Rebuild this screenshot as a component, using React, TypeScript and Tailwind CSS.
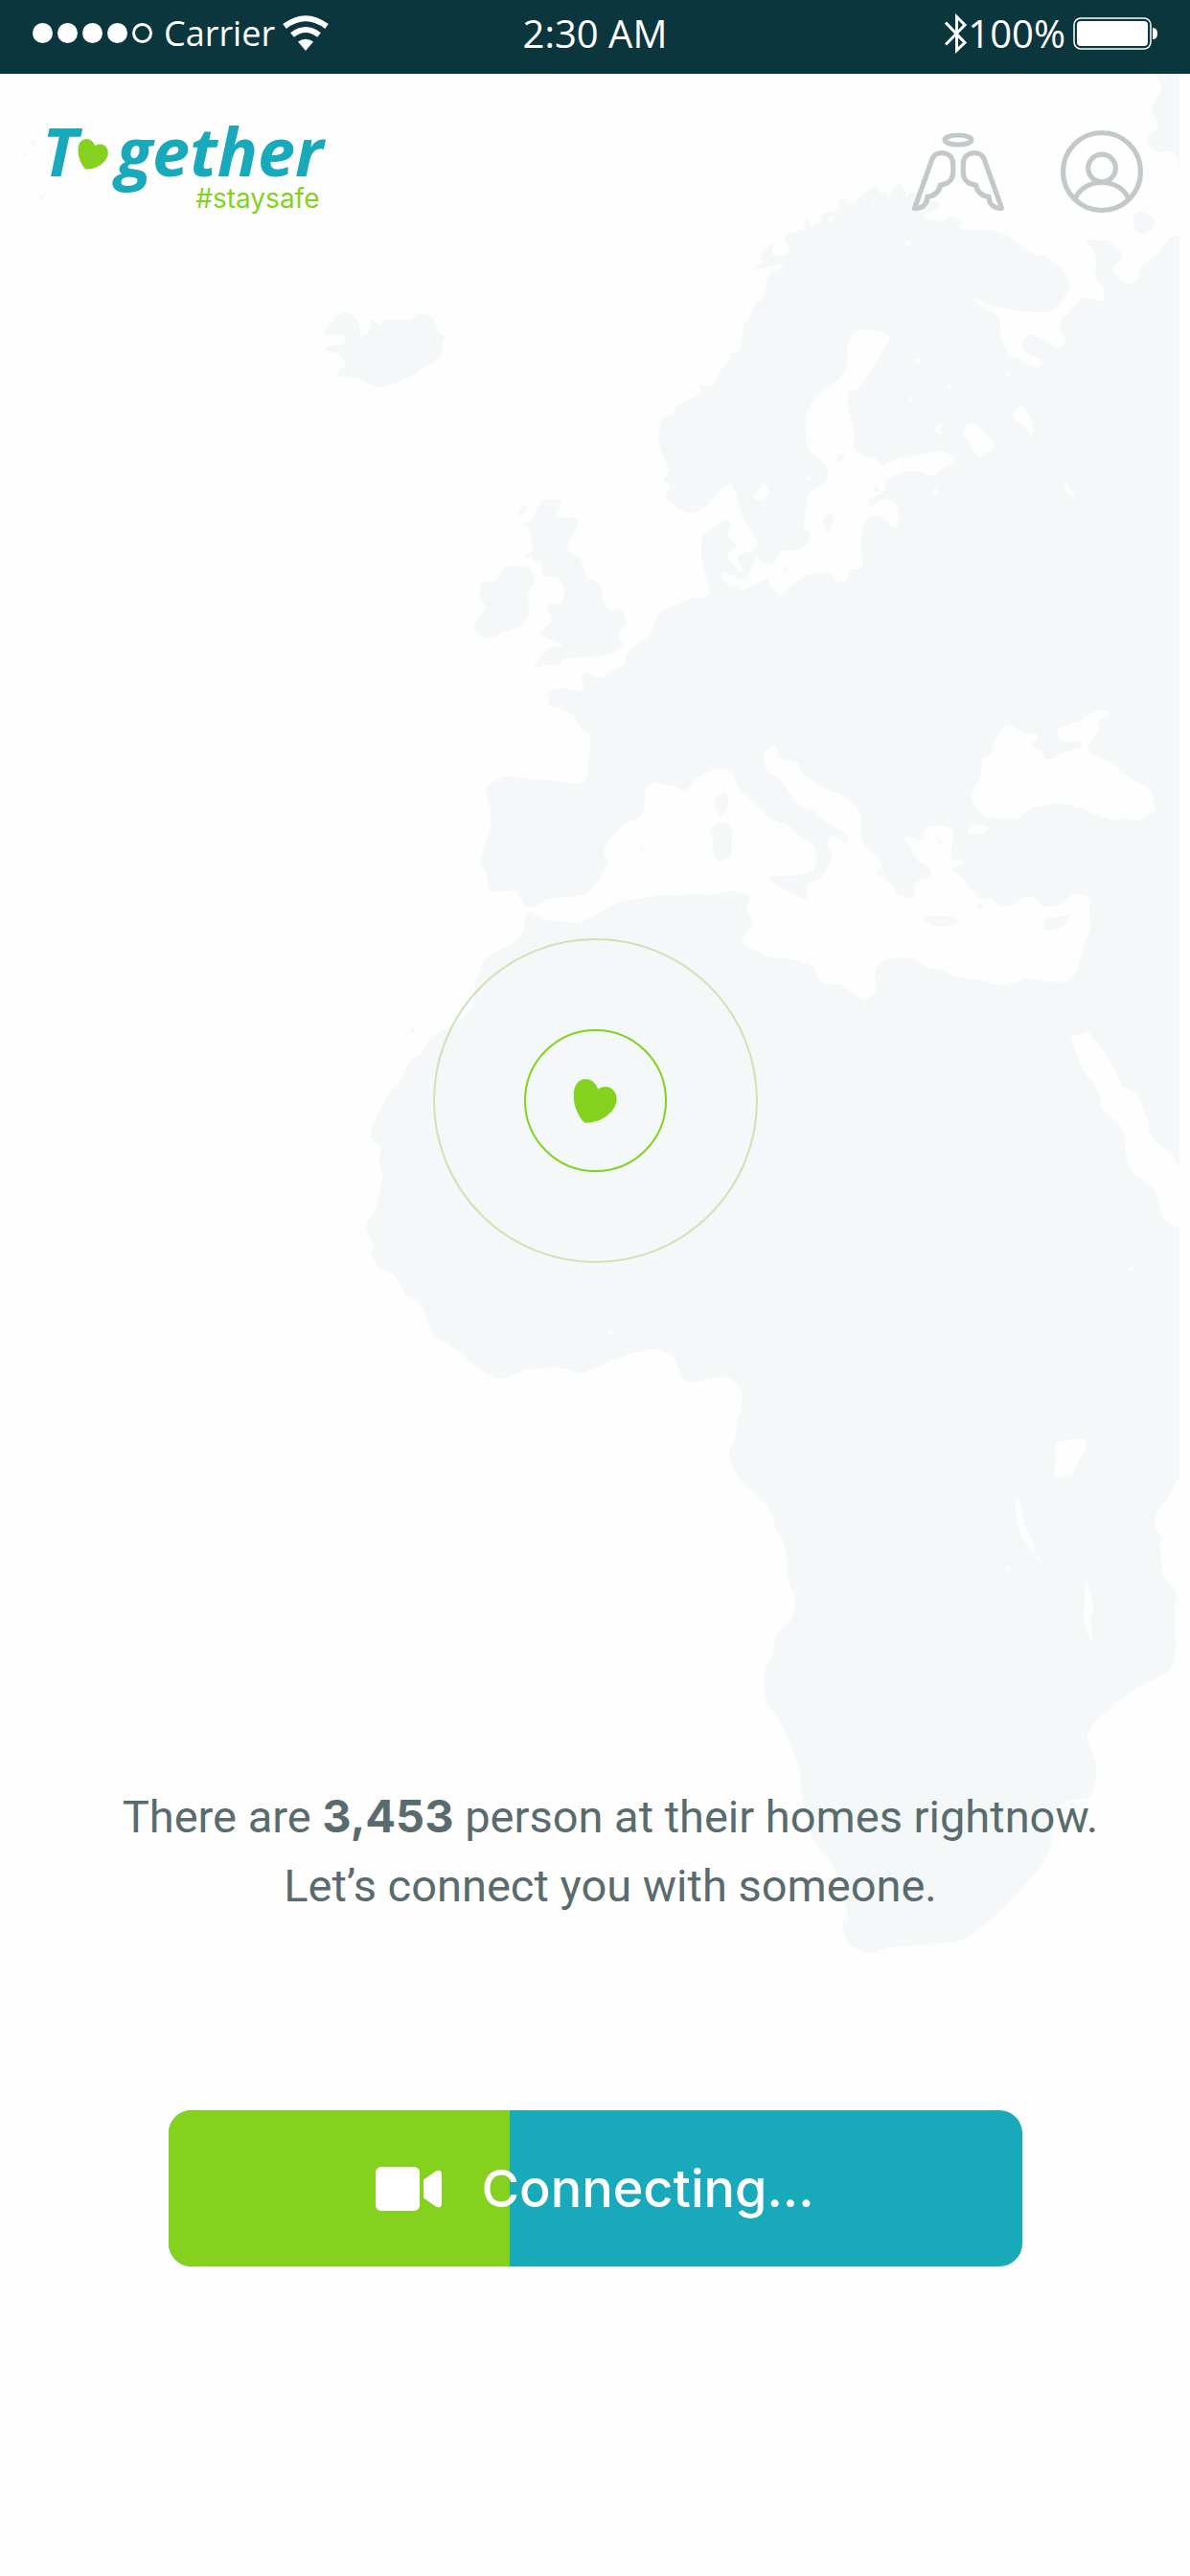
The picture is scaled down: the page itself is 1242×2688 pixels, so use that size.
import React from "react";

const LAND = "#f4f8f9";
const SEA = "#fefefe";

/** Closed, gently rounded outline through a flat list of x,y pairs. */
function outline(source: string): string {
  const n = source.trim().split(/[\s,]+/).map(Number);
  const pts: [number, number][] = [];
  for (let i = 0; i < n.length; i += 2) pts.push([n[i], n[i + 1]]);
  const count = pts.length;
  const at = (i: number) => pts[(i + count) % count];
  const k = 1 / 7;
  let d = `M${pts[0][0]} ${pts[0][1]}`;
  for (let i = 0; i < count; i++) {
    const a = at(i - 1);
    const b = at(i);
    const c = at(i + 1);
    const e = at(i + 2);
    d += `C${b[0] + (c[0] - a[0]) * k} ${b[1] + (c[1] - a[1]) * k} ${c[0] - (e[0] - b[0]) * k} ${c[1] - (e[1] - b[1]) * k} ${c[0]} ${c[1]}`;
  }
  return d + "Z";
}

const CONTINENT = `
1260,246 1231,246 1221,249 1208,265 1192,277 1189,290 1176,296 1161,281 1172,268 1166,259 1156,251 1134,251 1143,266 1144,290 1151,299 1151,313 1131,311 1118,324 1105,340 1112,356 1104,363 1091,356 1074,349 1067,359 1071,368 1086,375 1084,383 1073,381 1064,374 1053,370 1044,349 1043,332 1028,322 1016,311
1044,321 1078,326 1101,322 1116,299 1108,281 1091,268 1076,264 1058,250 1038,241 1004,239 1003,231 993,226 984,231 971,230 963,225 978,218 980,213 971,208 951,201 946,206 945,199 938,192 930,200 928,207 924,201 917,201 914,194 903,201 886,212 884,208 876,209 876,218 858,224 856,233 845,236 844,229 839,231 841,237 831,242 821,244 819,252 825,261 819,266 806,265 807,253 794,266 796,273 787,281 819,276 806,284 800,292 799,302 795,313 788,316 781,334 776,338 775,352 771,366
763,369 761,376 752,387 743,402 730,403 731,410 715,419 704,426 703,433 690,438 688,466 698,489 692,500 700,507 695,520 719,535 737,528 750,514 762,505 768,514 771,527 778,545 790,566 788,575 796,587 809,586 816,575 831,574 842,568 845,554 839,552 840,538 844,516 862,502 863,486 843,467 842,431 858,409 878,393 885,377 884,363 891,347 908,344 926,349 928,356 922,365 911,384 895,406 886,408 885,424 891,449 892,468 904,477 913,478 921,485 941,477 983,471 997,481 983,489 973,496 951,491 926,500 922,513 907,521 910,528 924,521 936,529 937,547 931,549 918,538 906,541 898,563 900,590 888,595 883,606 873,606 864,597 844,600 824,613 814,621 804,611 801,604 786,611 774,616
771,613 758,609 754,597 771,602 771,596 760,584 762,575 768,569 760,560 762,544 755,544 735,557 732,576 733,587 741,616 735,624 723,624 707,631 688,640 678,662 657,678 650,694 637,700 628,707 610,702 607,707 609,719 600,721 587,718 572,723 575,737
585,740 598,746 605,759 616,769 614,798 608,817 580,815 553,813 527,810 508,821 507,825 511,840 512,862 502,897 508,910 510,927 522,931 537,930 548,945 557,946 577,937 607,934 623,921 634,901 631,885 650,861 670,850 674,823 683,817 702,820 715,825 728,812 748,802 763,806 773,825
791,842 804,854 821,861 836,873 848,882 853,897 847,909 828,913 808,914 805,920 838,938 842,935 843,922 856,917 868,894 864,883 866,873 873,873 883,880 885,873 878,867 854,852 851,845 836,841 823,826 814,813 799,802 798,785 809,778 814,791 831,795 839,808 859,822 881,831 897,848 898,870 904,884 918,897 924,916 934,927 936,934 954,937 954,928 958,919 972,914 968,904 959,898 946,878 947,873 957,877 963,875 967,864 983,862 994,867 993,895 1004,897 1003,902 994,907 1006,917 1011,925 1023,937 1034,937 1046,946 1059,943 1068,936 1079,937 1091,946 1109,943 1119,934 1137,937 1137,950 1138,967 1131,988 1124,1012 1114,1024 1091,1024 1073,1021 1048,1028 1024,1023 998,1019 984,1013 966,1009 954,1001 941,999 921,1003 913,1017 915,1032 904,1043 898,1042 879,1029 857,1025 848,1009 828,1001 806,999 793,994 776,985 775,978 785,963 779,948 783,934 771,932
765,929 743,934 720,933 707,935 687,935 650,940 622,954 605,963 588,961 568,960 555,952 549,956 542,978 507,1000 502,1014 496,1026 494,1047 483,1063 457,1078 448,1085 440,1099 429,1106 417,1129 407,1140 388,1175 389,1189 397,1198 396,1211 399,1231 393,1258 382,1281 390,1298 388,1308 395,1322 409,1329 418,1341 423,1350 440,1364 453,1394 470,1404 503,1430 525,1439 548,1430 582,1427 605,1433 623,1427 640,1419 660,1412 683,1408 702,1416 713,1439 725,1442 758,1437 773,1450 774,1468 769,1483 768,1499 761,1518 773,1544 802,1573 810,1595 819,1613 822,1631 822,1646 830,1669 827,1687 810,1707 807,1725 799,1742 799,1774 813,1794 833,1841
836,1866 849,1920 871,1949 884,1997 879,2007 886,2028 908,2038 931,2032 978,2028 1011,2021 1054,1984 1094,1935 1104,1885 1138,1874 1144,1841 1136,1807 1178,1767 1218,1745 1227,1723 1226,1681 1228,1662 1214,1643 1211,1611 1213,1605 1205,1592 1209,1576 1219,1563 1231,1542 1260,1520`;

const ISLANDS = [
  "1206,70 1212,91 1207,102 1202,115 1208,127 1207,136 1199,141 1199,152 1209,159 1221,158 1229,165 1232,176 1260,176 1260,60",
  "1184,224 1193,221 1205,229 1204,236 1194,244 1185,240 1183,231",
  "859,545 864,537 870,536 869,547 864,555",
  "770,581 788,575 788,584 781,600 775,604 766,601 775,595",
  "339,346 350,331 362,326 373,334 377,351 385,346 386,335 389,334 396,339 402,333 427,334 437,327 450,330 455,339 457,346 464,352 461,362 461,369 452,379 440,384 432,391 400,404 380,398 372,394 355,393 353,387 361,381 355,370 342,366 343,361 357,359 361,352 353,349 341,350",
  "566,523 586,523 579,538 600,541 602,548 592,573 605,582 613,601 625,610 634,635 648,637 653,648 645,665 651,672 640,681 610,686 590,687 583,694 570,694 560,697 558,694 573,676 587,673 565,663 564,660 576,646 572,637 573,630 585,629 589,618 582,603 566,600 565,584 559,587 553,578 556,571 552,553 547,546 555,542",
  "502,608 517,606 527,592 550,592 558,606 551,619 552,637 545,652 533,657 510,666 497,660 495,653 506,634 501,623",
  "542,539 543,531 551,527 548,535",
  "746,834 757,827 760,837 753,853 747,844",
  "742,866 753,858 763,864 763,891 752,898 745,893 744,877",
  "964,960 968,956 993,957 999,963 983,967",
  "1089,963 1096,958 1116,955 1113,963 1099,971 1091,970",
].map(outline).join("");

const WATERS = [
  "1054,757 1068,764 1083,767 1077,777 1086,783 1093,793 1114,784 1128,780 1128,774 1111,773 1103,764 1114,756 1128,752 1141,743 1156,743 1145,755 1147,762 1135,779 1144,789 1161,797 1181,813 1199,823 1205,838 1204,847 1188,856 1174,854 1163,856 1138,848 1129,843 1104,839 1081,842 1068,850 1061,855 1031,853 1021,845 1014,830 1023,812 1026,792 1034,787 1038,773 1048,758",
  "1011,867 1016,861 1031,863 1026,870 1012,870",
  "1118,1082 1126,1080 1133,1077 1139,1080 1159,1108 1169,1127 1171,1133 1186,1142 1198,1168 1199,1181 1208,1193 1224,1205 1232,1219 1260,1240 1260,1285 1231,1281 1214,1270 1204,1241 1179,1219 1171,1178 1149,1155 1148,1142 1128,1111",
  "1014,441 1036,459 1036,468 1024,477 1019,474 1006,452",
  "1057,431 1069,424 1079,447 1075,455 1071,447 1059,438",
  "975,449 984,441 982,447 983,454",
  "1112,503 1122,515 1118,517 1112,513",
  "798,505 802,513 798,521 788,521 789,515",
  "1103,1506 1129,1502 1134,1510 1121,1533 1119,1540 1101,1540 1102,1522",
  "1061,1565 1064,1565 1069,1589 1076,1605 1080,1619 1071,1610 1064,1597 1060,1573",
  "1133,1653 1137,1659 1141,1678 1138,1691 1141,1712 1136,1707 1131,1688 1133,1672",
].map(outline).join("");

const ISLETS = [
  [877, 478, 4], [915, 510, 3], [820, 593, 2], [670, 887, 2], [431, 1075, 2], [1023, 946, 3],
  [919, 911, 3], [981, 879, 2], [1056, 353, 1], [550, 580, 2], [35, 149, 2], [25, 161, 2], [43, 207, 2], [806, 883, 1],
];
const PONDS = [
  [958, 377, 3], [948, 254, 3], [1052, 391, 2], [976, 513, 3], [950, 416, 2], [991, 403, 2],
  [867, 229, 3], [844, 499, 2], [1222, 164, 4], [1083, 1625, 2], [1052, 1637, 2], [637, 1390, 2], [1102, 472, 1], [1181, 1324, 2],
];

function WorldMap() {
  return (
    <svg viewBox="0 0 1242 2100" aria-hidden="true" className="pointer-events-none absolute inset-x-0 top-0 -z-10 h-auto w-full">
      <clipPath id="map-edge">
        <rect width="1231" height="2100" />
      </clipPath>
      <g clipPath="url(#map-edge)">
        <path fill={LAND} d={outline(CONTINENT)} />
        <path fill={LAND} d={ISLANDS} />
        <path fill={SEA} d={WATERS} />
        <g fill={LAND}>
          {ISLETS.map(([x, y, r]) => <circle key={`${x}-${y}`} cx={x} cy={y} r={r} />)}
        </g>
        <g fill={SEA}>
          {PONDS.map(([x, y, r]) => <circle key={`${x}-${y}`} cx={x} cy={y} r={r} />)}
        </g>
        <path fill={SEA} d="M911 212q1-6 2-10q-1 9-1 18z" />
      </g>
    </svg>
  );
}

function Heart({ className }: { className: string }) {
  return (
    <svg viewBox="0 0 46 48" aria-hidden="true" className={className} fill="#84d21e">
      <path d="M13.3 1C19 1 24 5 26.3 11.8C28 10 30 9 34 9C41 9 45.7 15 45.7 22C45.7 33 32 46.7 13.3 46.7Q11.5 46.7 10.5 45C5 38 .7 29 .7 18C.7 7 6 1 13.3 1Z" />
    </svg>
  );
}

function StatusBar() {
  return (
    <div className="grid h-[77px] grid-cols-3 items-center bg-[#0c363d] px-[34px] pb-2 font-['Open_Sans',sans-serif] text-[40px] leading-none text-white">
      <div className="flex items-center gap-2">
        <div className="flex gap-[5px]" role="img" aria-label="Signal 4 of 5">
          <i className="size-[21px] rounded-full bg-white" />
          <i className="size-[21px] rounded-full bg-white" />
          <i className="size-[21px] rounded-full bg-white" />
          <i className="size-[21px] rounded-full bg-white" />
          <i className="size-[21px] rounded-full border-[3px] border-white" />
        </div>
        <span className="pl-1 text-[36px] leading-none">Carrier</span>
        <svg viewBox="0 0 48 37" className="h-[37px] w-12" aria-label="Wi-Fi" fill="none" stroke="#fff" strokeWidth="6">
          <path d="M2 11.5Q24-5 46 11.5" />
          <path d="M10 20.5Q24 9.500 38 20.500" />
          <path d="M16 27.500Q24 22 32 27.500L24 37Z" fill="#fff" stroke="none" />
        </svg>
      </div>
      <div className="text-center">2:30 AM</div>
      <div className="flex items-center justify-end">
        <svg viewBox="0 0 24 42" className="h-[42px] w-6" aria-label="Bluetooth" fill="none" stroke="#fff" strokeWidth="3">
          <path d="M1 9.500L21 30.500L12.500 38.500V3.500L21 12L1 32.500" />
        </svg>
        <span>100%</span>
        <svg viewBox="0 0 88 34" className="ml-2 h-[34px] w-[88px]" aria-label="Battery full">
          <rect x="1" y="1" width="80" height="32" rx="7" fill="none" stroke="#fff" strokeWidth="1.500" />
          <rect x="4" y="4" width="74" height="26" rx="4" fill="#fff" />
          <path d="M83 11q5 0 5 6t-5 6z" fill="#fff" />
        </svg>
      </div>
    </div>
  );
}

function Logo() {
  return (
    <a href="#" aria-label="Together #staysafe" className="flex flex-col items-end">
      <span className="flex items-center font-['Open_Sans',sans-serif] text-[70px] leading-[72px] font-bold text-[#18aabb] italic">
        T
        <Heart className="mt-2 h-[34px] w-8" />
        <span className="pl-2">gether</span>
      </span>
      <span className="-mt-0.5 pr-1 font-['Inter',sans-serif] text-[28px] leading-8 text-[#84d21e]">#staysafe</span>
    </a>
  );
}

function AngelIcon() {
  const wing = "M3.500 80.400L22 28.600C24 24 27 22.600 31.700 22.600C39 22.600 43.700 27 43.700 34V43C43.700 51 38 55.500 30.300 56C30.500 62 24 68 16.700 68.300C17.500 75 12 81 3.500 80.400Z";
  return (
    <svg viewBox="0 0 98 84" className="h-[84px] w-[98px]" aria-hidden="true" fill="none" stroke="#c3c9c9" strokeWidth="5.200" strokeLinejoin="round">
      <ellipse cx="49" cy="9" rx="14" ry="5" />
      <path d={wing} />
      <path d={wing} transform="matrix(-1 0 0 1 98 0)" />
    </svg>
  );
}

function ProfileIcon() {
  return (
    <svg viewBox="0 0 88 88" className="size-[88px]" aria-hidden="true" fill="none" stroke="#c3c9c9" strokeWidth="5.200">
      <circle cx="44" cy="44" r="40.500" />
      <circle cx="44" cy="40.500" r="14.300" />
      <path d="M16 72.500C21 62 31 55.500 44 55.500S67 62 72 72.500" />
    </svg>
  );
}

export default function App() {
  return (
    <div className="relative isolate flex min-h-screen flex-col bg-[#fefefe]">
      <WorldMap />
      <StatusBar />

      <header className="flex h-[148px] items-start justify-between pt-11 pr-12 pl-11">
        <Logo />
        <nav className="flex items-center gap-[57px] pt-3.5">
          <button type="button" aria-label="Angels"><AngelIcon /></button>
          <button type="button" aria-label="Profile"><ProfileIcon /></button>
        </nav>
      </header>

      <main className="flex flex-col items-center pt-[754px]">
        <div className="flex size-[339px] items-center justify-center rounded-full border-2 border-[#cde3b5]">
          <div className="flex size-[149px] items-center justify-center rounded-full border-2 border-[#84d21e]">
            <Heart className="h-12 w-[46px]" />
          </div>
        </div>

        <p className="mt-[541px] pl-8 text-center font-['Roboto',sans-serif] text-[47px] leading-[72px] text-[#5a6b6d]">
          There are <strong className="font-['Inter',sans-serif] font-bold">3,453</strong> person at their homes rightnow.
          <br />
          Let’s connect you with someone.
        </p>

        <button
          type="button"
          className="relative mt-[198px] flex h-[163px] w-[891px] items-center justify-center overflow-hidden rounded-3xl bg-[#18aabb] text-white"
        >
          <span className="absolute inset-y-0 left-0 w-2/5 bg-[#84d21e]" />
          <span className="relative flex items-center gap-10">
            <svg viewBox="0 0 70 46" className="h-[46px] w-[70px]" aria-hidden="true" fill="#fff">
              <rect width="46" height="46" rx="6" />
              <path d="M50 13.500L63 4.500Q69 2 69 8V38Q69 44 63 41.500L50 32.500Z" />
            </svg>
            <span className="font-['Inter',sans-serif] text-[54px] leading-none font-medium">Connecting...</span>
          </span>
        </button>
      </main>
    </div>
  );
}
